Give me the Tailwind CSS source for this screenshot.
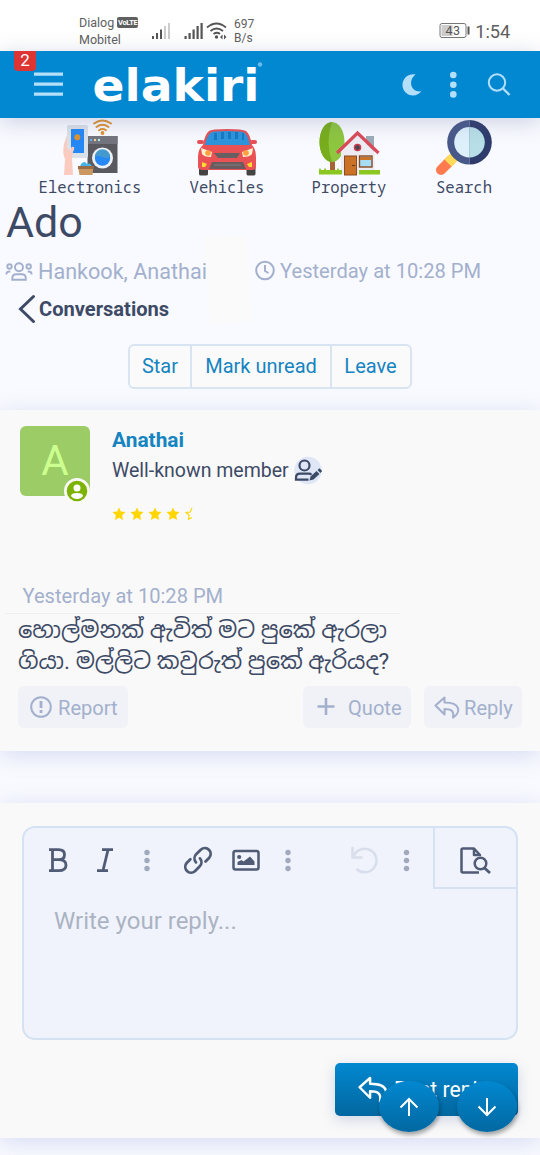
<!DOCTYPE html>
<html lang="en">
<head>
<meta charset="utf-8">
<meta name="viewport" content="width=device-width, initial-scale=1">
<title>Ado</title>
<script src="https://cdn.jsdelivr.net/npm/@tailwindcss/browser@4"></script>
</head>
<body class="h-[1155px] w-[540px] overflow-hidden bg-[#f9faff] font-['Roboto',sans-serif] text-[20px] text-[#3d4a66]">
<svg width="0" height="0" class="hidden">
  <symbol id="reply" viewBox="0 0 26 24"><path d="M10.500 2.500 1.500 10.500 10.500 19.500V14C16 14 20.500 15 19 22.500 26 18.500 28.500 7.500 10.500 7.500Z" fill="none" stroke="currentColor" stroke-width="2.100" stroke-linejoin="round"/></symbol>
  <symbol id="star" viewBox="0 0 14 14"><path d="m7 .5 1.900 4 4.600.6-3.300 3.200.8 4.700L7 10.800 3 13l.8-4.700L.5 5.100l4.600-.6Z"/></symbol>
</svg>

<div class="flex h-[51px] bg-white pl-[79px] text-[12.5px] leading-[17px] text-[#606060]">
  <div class="w-[72px] pt-[14px]">
    <div class="flex items-center gap-[3px]"><span>Dialog</span><span class="flex h-[11px] w-[21px] shrink-0 items-center justify-center rounded-[2px] bg-[#606060] text-[7.5px] font-bold leading-[11px] tracking-[-0.3px] text-white">VoLTE</span></div>
    <div>Mobitel</div>
  </div>
  <svg class="mt-[20px]" width="78" height="21" fill="#555">
    <rect x="1" y="16" width="2" height="3"/><rect x="5" y="13" width="2" height="6"/><rect x="9" y="9.500" width="2" height="9.500"/><rect x="13" y="6" width="2" height="13" fill="#ccc"/><rect x="17" y="3" width="2" height="16" fill="#ccc"/>
    <rect x="33.500" y="16" width="2.200" height="3"/><rect x="37.500" y="13" width="2.200" height="6"/><rect x="41.500" y="9.500" width="2.200" height="9.500"/><rect x="45.500" y="6" width="2.200" height="13"/><rect x="49.500" y="3" width="2.200" height="16"/>
    <g fill="none" stroke="#555" stroke-width="1.800"><path d="M56 7.500q9.500-8 19 0M59.500 11q6-5 12.500 0M62.500 14q3.500-2.500 6.500 0"/></g><circle cx="65.500" cy="17" r="1.700"/><path d="m69 17 2.500-2.500v5zm6.500 0L73 14.500v5z"/>
  </svg>
  <div class="ml-[5px] pt-[17px] text-[12px] leading-[14px]">697<br>B/s</div>
  <svg class="mt-[22px] ml-[185px]" width="32" height="18"><rect x="1" y="1.500" width="26" height="14" rx="2" fill="#fff" stroke="#777"/><rect x="2.500" y="3" width="11" height="11" fill="#ccc"/><rect x="28.500" y="4.500" width="2" height="8" fill="#555"/><text x="6.500" y="13" font-family="Roboto" font-size="12.500" fill="#555" textLength="14.500">43</text></svg>
  <span class="ml-[4px] mt-[21px] text-[18.2px] leading-[22px]">1:54</span>
</div>

<header class="relative flex h-[67px] bg-[#0288d1] shadow-[0_4px_22px_rgba(90,100,150,0.28)]">
  <div class="absolute left-[14px] top-0 flex h-[20px] w-[22px] items-center justify-center rounded-b-[4px] bg-[#dd3434] text-[17px] leading-none text-white"><span class="-mt-[2px]">2</span></div>
  <svg width="540" height="67" fill="#b3dffb">
    <path d="M34 21.500h29v3.300h-29zM34 31.500h29v3.300h-29zM34 41.500h29v3.300h-29z"/>
    <text x="92.500" y="50" font-family="DejaVu Sans" font-weight="700" font-size="44" fill="#fff" textLength="167" lengthAdjust="spacingAndGlyphs">elakiri</text>
    <circle cx="260" cy="13.500" r="1.800" fill="#6dbceb" stroke="#6dbceb" stroke-width="1"/>
    <path d="M415.500 23.500C408 22.500 402.500 27.500 402.500 34c0 6 5 10.500 10.500 10.500 3.500 0 6.300-1.500 8.300-4.200-10 1.400-14-10.300-5.800-16.800Z"/>
    <circle cx="453.300" cy="24" r="3.300"/><circle cx="453.300" cy="33.700" r="3.300"/><circle cx="453.300" cy="43.400" r="3.300"/>
    <g fill="none" stroke="#b3dffb" stroke-width="2"><circle cx="497" cy="31.500" r="8.200"/><path d="m503 37.500 6.500 6.500" stroke-width="2.300"/></g>
  </svg>
</header>

<nav class="flex h-[79px] pl-[30px] text-center font-['Noto_Sans_Mono','DejaVu_Sans_Mono',monospace] text-[15.6px] leading-[18px]">
  <a class="flex w-[120px] flex-col items-center"><svg width="60" height="60" viewBox="60 118 60 60">
    <rect x="87.500" y="136" width="30" height="37" fill="#59595f"/><rect x="87.500" y="136" width="30" height="8" fill="#74747e"/><circle cx="91" cy="140" r="1.200" fill="#5bb9f5"/><circle cx="95" cy="140" r="1.200" fill="#fc8"/><circle cx="99" cy="140" r="1.200" fill="#aee"/>
    <circle cx="102.500" cy="158" r="10.500" fill="#edf1f4"/><circle cx="102.500" cy="158" r="7.700" fill="#2588f5"/><path d="M94.800 157a7.700 7.700 0 0 1 15.400 0q-4 2-8 0t-7.400 0Z" fill="#4499cf"/>
    <rect x="67" y="125" width="21" height="33" rx="2" fill="#dbe1e8"/><rect x="71" y="129" width="13" height="24" fill="#2588f5"/><circle cx="77.300" cy="137.300" r="3" fill="#dd9332"/>
    <path d="M67 135v13q3 2 4 4-1-6 3-5 1 2-1 5l-1 6 1 17H64l1-16q-3-6-1-15Z" fill="#fbcbc0"/>
    <path d="M80 167q1-5 5-5l2 2q4-2 5 3Z" fill="#43b4e8"/><path d="M78 166h15.500l-1 9h-13Z" fill="#c9975f"/><path d="M78 166h15.500v3H78Z" fill="#9b6b43"/>
    <g fill="none" stroke="#dd9332" stroke-width="1.900" stroke-linecap="round"><path d="M94 123.500q8.500-6 17 0M96.500 127q6-4.500 12 0M99 130.300q3.500-2.500 7 0"/></g><circle cx="102.500" cy="133" r="1.900" fill="#dd9332"/>
  </svg><span>Electronics</span></a>
  <a class="ml-[17px] flex w-[120px] flex-col items-center"><svg width="62" height="60" viewBox="196 118 62 60">
    <path d="M199 166h9v8q0 1.500-2 1.500h-5q-2 0-2-1.500ZM246.500 166h9v8q0 1.500-2 1.500h-5q-2 0-2-1.500Z" fill="#444"/>
    <rect x="197" y="140" width="7" height="4" rx="2" fill="#e65158"/><rect x="250" y="140" width="7" height="4" rx="2" fill="#e65158"/>
    <path d="M203 145q2-11 6-14 2-2 18-2t19 2q4 3 6 14 4 4 4 12v10q0 3-4 3h-49q-5 0-5-3v-10q0-8 5-12Z" fill="#e95154"/>
    <path d="M205 145q2-10 6-12.500 2-1.500 16-1.500t17 1.500q4 2.500 6 12.500Z" fill="#2d94dc"/><path d="M214 133h3v7h-3zM221 132h3v7h-3zM228 132h3v7h-3zM235 132h3v7h-3zM242 133h2v7h-2z" fill="#1679c4"/>
    <path d="M214 153h26l-3 5h-19Z" fill="#685f62"/><path d="m212 162h31l3 7h-37Z" fill="#695b5e"/><path d="M214 165h27" stroke="#897e80"/>
    <path d="m201 148 11 4-1 5q-7 0-9-3ZM253 148l-11 4 1 5q7 0 9-3Z" fill="#fff0cf"/><circle cx="208" cy="153" r="2.800" fill="#ff9f40"/><circle cx="246" cy="153" r="2.800" fill="#ff9f40"/>
    <path d="m202 162 5 2-2 3h-3ZM252 162l-5 2 2 3h3Z" fill="#ffdc32"/>
  </svg><span>Vehicles</span></a>
  <a class="ml-[2px] flex w-[120px] flex-col items-center"><svg width="62" height="60" viewBox="318 118 62 60">
    <path d="M330 160h5v13h-5Z" fill="#a76435"/><ellipse cx="332" cy="142" rx="12.500" ry="20" fill="#8dc63f"/><path d="M332 122a12.500 20 0 0 0 0 40q-7-20 0-40Z" fill="#78ad1d"/>
    <rect x="366" y="136" width="8" height="17" fill="#9aadb5"/><path d="m341 151 16.500-16 17 17v22H341Z" fill="#ececf2"/><path d="m337 153 20.500-20 21 20" fill="none" stroke="#da4b59" stroke-width="3.200"/>
    <circle cx="357.500" cy="147.500" r="3" fill="#46464f" stroke="#c83d4e" stroke-width="1.500"/><rect x="344.500" y="156" width="12" height="19" fill="#ca7225" stroke="#8b4b23"/><path d="M352 165.500h3" stroke="#603815"/><rect x="359.500" y="156" width="12.500" height="11" fill="#a7def6" stroke="#8b4b23" stroke-width="1.400"/><path d="M360 157h11v3h-11z" fill="#ca7225"/>
    <path d="M319 170q1-4 2 0l3 0q1-4 2 0h11q1-4 2 0l3 0v4.500h-23ZM359 170h21v4.500h-21Z" fill="#8bc720"/>
  </svg><span>Property</span></a>
  <a class="flex w-[110px] flex-col items-center"><svg width="60" height="60" viewBox="434 118 60 60">
    <path d="m441 170 6-6" stroke="#ff7b4f" stroke-width="10" stroke-linecap="round"/><path d="m447 164 5-5" stroke="#ff7b4f" stroke-width="10"/><path d="m448 163 6-6" stroke="#ffdb57" stroke-width="10"/>
    <path d="M469.500 120a22.300 22.300 0 0 0 0 44.600Z" fill="#485989"/><path d="M469.500 120a22.300 22.300 0 0 1 0 44.600Z" fill="#2e3b6b"/><path d="M469.500 127a15.300 15.300 0 0 0 0 30.600Z" fill="#def1fb"/><path d="M469.500 127a15.300 15.300 0 0 1 0 30.600Z" fill="#b8dfe8"/>
  </svg><span>Search</span></a>
</nav>

<h1 class="h-[49px] pl-[6px] text-[43px] leading-[50px]">Ado</h1>
<div class="flex h-[46px] text-[#a3b0cd]">
  <svg class="ml-[5px] mt-[15px] shrink-0" width="28" height="22" fill="none" stroke="currentColor" stroke-width="1.900"><circle cx="14" cy="6.300" r="4"/><circle cx="4.500" cy="5.500" r="2.200"/><circle cx="23.700" cy="5.500" r="2.200"/><path d="M7.300 18.700v-1.500q0-4 4-4h5.500q4 0 4 4v1.500ZM1.500 13.500v-1q0-2 3.800-2M26.500 13.500v-1q0-2-3.800-2"/></svg>
  <span class="mt-[14px] w-[174px] shrink-0 pl-[5px] text-[21.6px] leading-[24px] whitespace-nowrap">Hankook, Anathai</span>
  <div class="-mt-[10px] h-[87px] w-[42px] shrink-0 -rotate-3 bg-[#fafafa]"></div>
  <svg class="ml-[5px] mt-[14px] shrink-0" width="21" height="21" fill="none" stroke="currentColor" stroke-width="2"><circle cx="11" cy="10.500" r="8.800"/><path d="M11 5v6l3.500 2"/></svg>
  <span class="mt-[13px] pl-[5px] text-[20.15px] leading-[24px] whitespace-nowrap">Yesterday at 10:28 PM</span>
</div>
<div class="flex h-[52px] text-[20.1px] font-bold leading-[24px]">
  <svg class="ml-[18px] mt-px" width="18" height="31" fill="none" stroke="currentColor" stroke-width="3" stroke-linecap="round"><path d="M15.500 3.500 2.500 16l13 12.500"/></svg>
  <span class="ml-[3px] mt-[5px]">Conversations</span>
</div>
<div class="mx-auto flex h-[45px] w-[284px] rounded-[6px] border-2 border-[#d9e4f2] bg-[#fafafa] text-center leading-[40px] text-[#1584c0]">
  <div class="w-[62px] border-r-2 border-[#d9e4f2]">Star</div><div class="w-[140px] border-r-2 border-[#d9e4f2]">Mark unread</div><div class="flex-1 pr-px">Leave</div>
</div>

<article class="mt-[21px] h-[341px] bg-[#f9f9f9] shadow-[0_4px_22px_rgba(90,110,190,0.22)]">
  <div class="flex pl-[20px] pt-[16px]">
    <div class="relative h-[70px] w-[70px] rounded-[6px] bg-[#9ccc65] text-center text-[42px] leading-[69px] text-[#ccff90]">A
      <svg class="absolute left-[43px] top-[51px]" width="28" height="28"><circle cx="14" cy="14" r="13" fill="#f9f9f9"/><circle cx="14" cy="14" r="10.300" fill="#7cb305"/><circle cx="14" cy="11" r="3.500" fill="#fff"/><path d="M8 19q0-3 6-3t6 3q-2 3-6 3t-6-3Z" fill="#fff"/></svg>
    </div>
    <div class="ml-[22px]">
      <div class="text-[20.9px] font-bold leading-[29px] text-[#1584c0]">Anathai</div>
      <div class="flex h-[30px] items-center"><span class="mt-[2px] text-[19.5px] leading-[30px]">Well-known member</span>
        <svg class="ml-[5px]" width="30" height="29"><circle cx="14" cy="14.500" r="13.700" fill="#dfe7f7"/><g fill="none" stroke="currentColor" stroke-width="2.200"><circle cx="10.500" cy="9.500" r="5"/><path d="M14.500 23.700H2v-2q0-4 4-4h9q1.500 0 2.500 1"/></g><path d="m15.500 24.500 1-4 6-5.500 3 3-6 5.500ZM23.500 14l2-1.700 2.700 2.700-1.900 2Z" fill="currentColor"/></svg>
      </div>
      <div class="mt-[22px] -ml-[0.5px] flex gap-[4.300px] fill-[#ffd600]"><svg width="14" height="14"><use href="#star"/></svg><svg width="14" height="14"><use href="#star"/></svg><svg width="14" height="14"><use href="#star"/></svg><svg width="14" height="14"><use href="#star"/></svg><svg width="8" height="14"><path d="M7 1 5.200 5l-4 .5 3 2.800-.8 4L7 10.500" fill="none" stroke="#ffd600" stroke-width="1.100"/></svg></div>
    </div>
  </div>
  <div class="ml-[5px] mt-[62px] h-[31px] w-[395px] border-b border-[#eeeff0] pl-[17.5px] text-[20.1px] leading-[26px] text-[#a3b0cd]">Yesterday at 10:28 PM</div>
  <div class="h-[72px] pl-[18px] pt-px font-['Roboto','Noto_Sans_Sinhala','Noto_Sans',sans-serif] text-[22.6px] leading-[31px] whitespace-nowrap"><p>හොල්මනක් ඇවිත් මට පුකේ ඇරලා</p><p>ගියා. මල්ලිට කවුරුත් පුකේ ඇරියද?</p></div>
  <div class="flex h-[42px] px-[18px] text-[20.1px] text-[#a3b0cd]">
    <div class="flex w-[110px] items-center rounded-[6px] bg-[#f0f2f7] pl-[12px]"><svg width="22" height="22" fill="none" stroke="currentColor" stroke-width="2"><circle cx="11" cy="11" r="9.800"/><path d="M11 5v7M11 14v3" stroke-width="2.800"/></svg><span class="mt-[2px] ml-[6px]">Report</span></div>
    <div class="ml-auto flex w-[108px] items-center rounded-[6px] bg-[#f0f2f7] pl-[14px]"><svg width="18" height="18"><path d="M9 0v17M0.500 8.500h17" stroke="currentColor" stroke-width="2.600"/></svg><span class="mt-[2px] ml-[13px]">Quote</span></div>
    <div class="ml-[13px] flex w-[98px] items-center rounded-[6px] bg-[#f0f2f7] pl-[10px]"><svg width="26" height="24"><use href="#reply"/></svg><span class="mt-[2px] ml-[4px]">Reply</span></div>
  </div>
</article>

<section class="mt-[52px] h-[335px] bg-[#f9f9f9] px-[22px] pt-[23px] shadow-[0_4px_22px_rgba(90,110,190,0.22)]">
  <div class="h-[214px] rounded-[13px] border-2 border-[#d5e2f3] bg-[#f0f3fb]">
    <div class="flex h-[61px]">
      <svg width="409" height="61" viewBox="24 828 409 61" class="shrink-0" fill="none" stroke="#505b76" stroke-width="2.500" stroke-linejoin="round">
        <path d="M49 849.700h9.500q6 0 6 5t-6 5h-6.500M52.500 849.700v20.800M58.500 859.700q7.500 0 7.500 5.500t-7.500 5.500H49" stroke-width="2.800"/>
        <path d="M102 849.700h11M97 870.700h11M108 850l-5 20.500" stroke-width="2.800"/>
        <g transform="translate(182 844.400) scale(1.330)" stroke-width="2.100" stroke-linecap="round"><path d="M10.500 13.500a4.500 4.500 0 0 1 .3-6.200l3.500-3.500a4.400 4.400 0 0 1 6.200 6.200l-2.800 2.800M13.500 10.500a4.500 4.500 0 0 1-.3 6.200l-3.500 3.500a4.400 4.400 0 0 1-6.200-6.200l2.800-2.800"/></g>
        <rect x="233.500" y="851" width="25" height="18.500" rx="2"/><circle cx="239.200" cy="857" r="2.100" fill="#505b76" stroke="none"/><path d="M237.500 865v-3l4-2 2 1.500 6.500-5 4.500 5v3.500Z" fill="#505b76" stroke="none"/>
        <path d="M356.500 869A11.800 11.800 0 1 0 354 855.500M352.500 847v10.500h10" stroke="#d8deeb"/>
        <g fill="#a0aabc" stroke="none"><circle cx="147" cy="852.500" r="2.700"/><circle cx="147" cy="860.500" r="2.700"/><circle cx="147" cy="868.500" r="2.700"/><circle cx="288" cy="852.500" r="2.700"/><circle cx="288" cy="860.500" r="2.700"/><circle cx="288" cy="868.500" r="2.700"/><circle cx="406.500" cy="852.500" r="2.700"/><circle cx="406.500" cy="860.500" r="2.700"/><circle cx="406.500" cy="868.500" r="2.700"/></g>
      </svg>
      <div class="flex-1 border-b-2 border-l-2 border-[#d5e2f3]"><svg width="80" height="59" viewBox="435 828 80 59" fill="none" stroke="#505b76" stroke-width="2.500" stroke-linejoin="round"><path d="M479 872.500h-16q-1.500 0-1.500-1.500v-21q0-1.500 1.500-1.500h11l6 6.500h-6v-6"/><circle cx="480.500" cy="863.500" r="5.800"/><path d="m484.500 868 5.500 5" stroke-width="2.800"/></svg></div>
    </div>
    <div class="pl-[30px] pt-[17px] text-[24px] leading-[30px] text-[#abb3c3]">Write your reply...</div>
  </div>
  <div class="relative ml-auto mt-[23px] flex h-[53px] w-[183px] items-center rounded-[5px] bg-linear-to-b from-[#0288d1] to-[#02679f] pl-[22px] text-white shadow-[0_4px_14px_rgba(90,110,170,0.25)]">
    <svg class="-mt-[2px]" width="32" height="28"><use href="#reply"/></svg><span class="ml-[5px] text-[21.2px]">Post reply</span>
    <div class="absolute left-[44px] top-[18px] flex h-[51px] w-[60px] items-center justify-center rounded-[50%] bg-linear-to-b from-[#0288d1] to-[#0268a1] shadow-[1px_3px_4px_rgba(0,0,0,0.35)]"><svg width="20" height="20" fill="none" stroke="#fff" stroke-width="2"><path d="M10 19V2M1.500 10.500 10 2l8.500 8.500"/></svg></div>
    <div class="absolute left-[122px] top-[18px] flex h-[51px] w-[60px] items-center justify-center rounded-[50%] bg-linear-to-b from-[#0288d1] to-[#0268a1] shadow-[1px_3px_4px_rgba(0,0,0,0.35)]"><svg width="20" height="20" fill="none" stroke="#fff" stroke-width="2"><path d="M10 1v17M1.500 9.500 10 18l8.500-8.500"/></svg></div>
  </div>
</section>
</body>
</html>
